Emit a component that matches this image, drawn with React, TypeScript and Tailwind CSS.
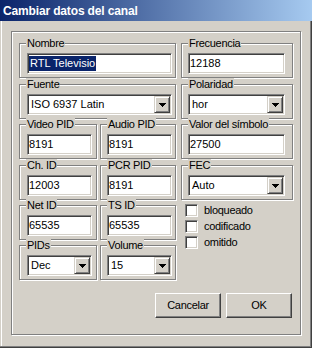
import type { ReactNode } from 'react';

const sunken =
  'border border-t-[#808080] border-l-[#808080] border-b-white border-r-white shadow-[inset_1px_1px_0_#404040,inset_-1px_-1px_0_#d4d0c8]';

function Group({
  label,
  pad = 'pl-[7px]',
  w,
  children,
}: {
  label: string;
  pad?: string;
  w: string;
  children: ReactNode;
}) {
  return (
    <div
      className={`relative h-[35px] pt-[9px] ${pad} ${w} border border-[#808080] shadow-[inset_1px_1px_0_#fff,1px_1px_0_#fff]`}
    >
      <span className="absolute left-[6px] top-[-7px] bg-[#d4d0c8] px-[1px] leading-[13px] tracking-[-0.3px] whitespace-nowrap">
        {label}
      </span>
      {children}
    </div>
  );
}

function Field({ value, w, selected }: { value: string; w: string; selected?: boolean }) {
  return (
    <div className={`h-[21px] ${w} ${sunken} bg-white pl-[1px] leading-[19px] whitespace-nowrap overflow-hidden`}>
      {selected ? (
        <span className="inline-block bg-[#0a246a] px-[1px] leading-[15px] text-white">{value}</span>
      ) : (
        value
      )}
    </div>
  );
}

function Arrow() {
  return (
    <svg width="7" height="4" viewBox="0 0 7 4">
      <path d="M0 0h7v1H0zM1 1h5v1H1zM2 2h3v1H2zM3 3h1v1H3z" fill="#000" />
    </svg>
  );
}

function Combo({ value, w }: { value: string; w: string }) {
  return (
    <div className={`flex h-[21px] items-center ${w} ${sunken} bg-white pr-[1px] leading-[19px]`}>
      <span className="flex-1 pl-[3px] whitespace-nowrap overflow-hidden">{value}</span>
      <div className="flex h-[17px] w-[16px] items-center justify-center border border-t-[#d4d0c8] border-l-[#d4d0c8] border-r-[#404040] border-b-[#404040] bg-[#d4d0c8] shadow-[inset_1px_1px_0_#fff,inset_-1px_-1px_0_#808080]">
        <Arrow />
      </div>
    </div>
  );
}

function Check({ label }: { label: string }) {
  return (
    <div className="flex h-[13px] items-center gap-[6px]">
      <div className={`h-[13px] w-[13px] ${sunken} bg-white`} />
      <span className="leading-[13px] tracking-[-0.3px]">{label}</span>
    </div>
  );
}

function Button({ label }: { label: string }) {
  return (
    <button className="h-[25px] w-[66px] border border-t-white border-l-white border-r-[#404040] border-b-[#404040] bg-[#d4d0c8] leading-[23px] tracking-[-0.3px] text-black shadow-[inset_-1px_-1px_0_#808080]">
      {label}
    </button>
  );
}

export default function App() {
  return (
    <div className="relative h-[348px] w-[312px] overflow-hidden bg-[#d4d0c8] font-['Liberation_Sans',Arial,sans-serif] text-[11px] text-black shadow-[inset_-1px_-1px_0_#404040,inset_-2px_-2px_0_#808080,inset_1px_1px_0_#d4d0c8,inset_2px_2px_0_#fff]">
      {/* Title bar */}
      <div className="h-[21px] bg-[linear-gradient(to_right,#0a246a,#a6caf0)] pl-[3px] pt-[2px] text-[12px] font-bold leading-[19px] tracking-[-0.15px] text-white">
        Cambiar datos del canal
      </div>

      {/* Etched frame */}
      <div className="ml-[11px] mt-[10px] h-[304px] w-[290px] border border-[#808080] pl-[7px] pt-[11px] shadow-[inset_1px_1px_0_#fff,1px_1px_0_#fff]">
        <div className="flex gap-[5px]">
          {/* Left column */}
          <div className="flex w-[157px] flex-col">
            <Group label="Nombre" w="w-[157px]">
              <Field value="RTL Televisio" w="w-[145px]" selected />
            </Group>
            <div className="mt-[6px]">
              <Group label="Fuente" w="w-[157px]">
                <Combo value="ISO 6937 Latin" w="w-[145px]" />
              </Group>
            </div>
            <div className="mt-[5px] flex gap-[3px]">
              <Group label="Video PID" w="w-[78px]" pad="pl-[7px]">
                <Field value="8191" w="w-[65px]" />
              </Group>
              <Group label="Audio PID" w="w-[76px]" pad="pl-[6px]">
                <Field value="8191" w="w-[65px]" />
              </Group>
            </div>
            <div className="mt-[6px] flex gap-[3px]">
              <Group label="Ch. ID" w="w-[78px]" pad="pl-[7px]">
                <Field value="12003" w="w-[65px]" />
              </Group>
              <Group label="PCR PID" w="w-[76px]" pad="pl-[6px]">
                <Field value="8191" w="w-[65px]" />
              </Group>
            </div>
            <div className="mt-[5px] flex gap-[3px]">
              <Group label="Net ID" w="w-[78px]" pad="pl-[7px]">
                <Field value="65535" w="w-[65px]" />
              </Group>
              <Group label="TS ID" w="w-[76px]" pad="pl-[6px]">
                <Field value="65535" w="w-[65px]" />
              </Group>
            </div>
            <div className="mt-[5px] flex gap-[3px]">
              <Group label="PIDs" w="w-[78px]" pad="pl-[7px]">
                <Combo value="Dec" w="w-[65px]" />
              </Group>
              <Group label="Volume" w="w-[76px]" pad="pl-[6px]">
                <Combo value="15" w="w-[65px]" />
              </Group>
            </div>
          </div>

          {/* Right column */}
          <div className="flex w-[112px] flex-col">
            <Group label="Frecuencia" w="w-[112px]" pad="pl-[6px]">
              <Field value="12188" w="w-[97px]" />
            </Group>
            <div className="mt-[6px]">
              <Group label="Polaridad" w="w-[112px]" pad="pl-[6px]">
                <Combo value="hor" w="w-[97px]" />
              </Group>
            </div>
            <div className="mt-[5px]">
              <Group label="Valor del símbolo" w="w-[112px]" pad="pl-[6px]">
                <Field value="27500" w="w-[97px]" />
              </Group>
            </div>
            <div className="mt-[6px]">
              <Group label="FEC" w="w-[112px]" pad="pl-[6px]">
                <Combo value="Auto" w="w-[97px]" />
              </Group>
            </div>
            <div className="mt-[4px] flex flex-col gap-[3px] pl-[4px]">
              <Check label="bloqueado" />
              <Check label="codificado" />
              <Check label="omitido" />
            </div>
          </div>
        </div>

        {/* Buttons */}
        <div className="mt-[13px] flex justify-end gap-[5px] pr-[8px]">
          <Button label="Cancelar" />
          <Button label="OK" />
        </div>
      </div>
    </div>
  );
}
